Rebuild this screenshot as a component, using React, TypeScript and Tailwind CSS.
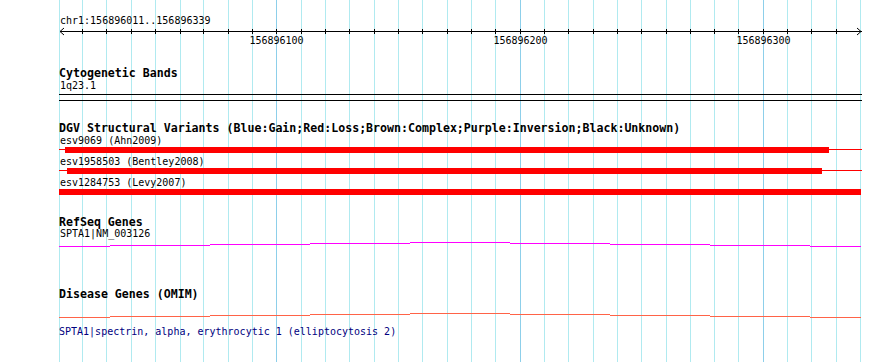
const GRID = [
  59, 82, 106, 131, 155, 180, 203, 228, 252, 276, 301, 325, 349, 374, 398, 422, 447,
  471, 495, 520, 544, 568, 593, 617, 641, 666, 690, 714, 738, 763, 787, 811, 836, 860,
];
const MAJOR = [276, 520, 763];
const LEFT = 59;
const WIDTH = 803;

// gene line drawn as a shallow arch: [from, to, drop]
const ARCH: [number, number, number][] = [
  [59, 110, 4],
  [110, 210, 3],
  [210, 310, 2],
  [310, 410, 1],
  [410, 510, 0],
  [510, 610, 1],
  [610, 710, 2],
  [710, 810, 3],
  [810, 861, 4],
];

const mono = { fontFamily: '"DejaVu Sans Mono", "Liberation Mono", monospace' };

function Label({ children, className = '' }: { children: React.ReactNode; className?: string }) {
  return (
    <div className={`text-[10px] leading-[10px] whitespace-pre ${className}`} style={mono}>
      {children}
    </div>
  );
}

function Title({ children, className = '' }: { children: React.ReactNode; className?: string }) {
  return (
    <div
      className={`text-[11.6px] leading-[12px] font-bold whitespace-pre text-black ${className}`}
      style={mono}
    >
      {children}
    </div>
  );
}

function Ruler() {
  return (
    <svg width={WIDTH} height={20} className="block">
      <rect x={1} y={5} width={802} height={1} fill="#000" />
      <polyline points="5,2 1,5.5 5,9" fill="none" stroke="#000" strokeWidth={1} />
      <polyline points="798,2 802,5.5 798,9" fill="none" stroke="#000" strokeWidth={1} />
      {GRID.slice(1, -1).map((g) => (
        <rect key={g} x={g - LEFT} y={3} width={1} height={5} fill="#000" />
      ))}
      {MAJOR.map((m, i) => (
        <text
          key={m}
          x={m - LEFT + 0.5}
          y={18.3}
          textAnchor="middle"
          fontSize={10}
          fill="#000"
          style={mono}
        >
          {156896100 + i * 100}
        </text>
      ))}
    </svg>
  );
}

function Variant({ start, end }: { start: number; end: number }) {
  return (
    <svg width={WIDTH} height={9} className="block">
      <rect x={0} y={3} width={WIDTH} height={1} fill="#ff0000" />
      <rect x={start - LEFT} y={1} width={end - start} height={6} fill="#ff0000" />
    </svg>
  );
}

function GeneLine({ color, top, height }: { color: string; top: number; height: number }) {
  return (
    <svg width={WIDTH} height={height} className="block">
      {ARCH.map(([a, b, d]) => (
        <rect key={a} x={a - LEFT} y={top + d} width={b - a} height={1} fill={color} />
      ))}
    </svg>
  );
}

export default function App() {
  return (
    <div className="relative w-[890px] h-[362px] bg-white overflow-hidden">
      <svg width={890} height={362} className="absolute inset-0 pointer-events-none">
        {GRID.map((g) => (
          <rect
            key={g}
            x={g}
            y={0}
            width={1}
            height={362}
            fill={MAJOR.includes(g) ? '#8dcfea' : '#b0eaf0'}
          />
        ))}
      </svg>

      <div className="relative flex flex-col pl-[59px] text-black">
        <Label className="mt-[16px] pl-px">chr1:156896011..156896339</Label>
        <Ruler />

        <Title className="mt-[21px]">Cytogenetic Bands</Title>
        <Label className="mt-[2px] pl-px">1q23.1</Label>
        <svg width={WIDTH} height={12} className="block">
          <rect x={0} y={3} width={WIDTH} height={1} fill="#000" />
          <rect x={0} y={9} width={WIDTH} height={1} fill="#000" />
        </svg>

        <Title className="mt-[19px]">
          DGV Structural Variants (Blue:Gain;Red:Loss;Brown:Complex;Purple:Inversion;Black:Unknown)
        </Title>
        <Label className="mt-[2px] pl-px">esv9069 (Ahn2009)</Label>
        <Variant start={65} end={829} />
        <Label className="mt-[2px] pl-px">esv1958503 (Bentley2008)</Label>
        <Variant start={67} end={822} />
        <Label className="mt-[2px] pl-px">esv1284753 (Levy2007)</Label>
        <svg width={WIDTH} height={9} className="block">
          <rect x={0} y={1} width={802} height={6} fill="#ff0000" />
        </svg>

        <Title className="mt-[19px]">RefSeq Genes</Title>
        <Label className="mt-[1px] pl-px">SPTA1|NM_003126</Label>
        <GeneLine color="#ff00ff" top={3} height={10} />

        <Title className="mt-[39px]">Disease Genes (OMIM)</Title>
        <GeneLine color="#ff6347" top={13} height={20} />
        <Label className="mt-[7px] text-[#000080]">
          SPTA1|spectrin, alpha, erythrocytic 1 (elliptocytosis 2)
        </Label>
      </div>
    </div>
  );
}
